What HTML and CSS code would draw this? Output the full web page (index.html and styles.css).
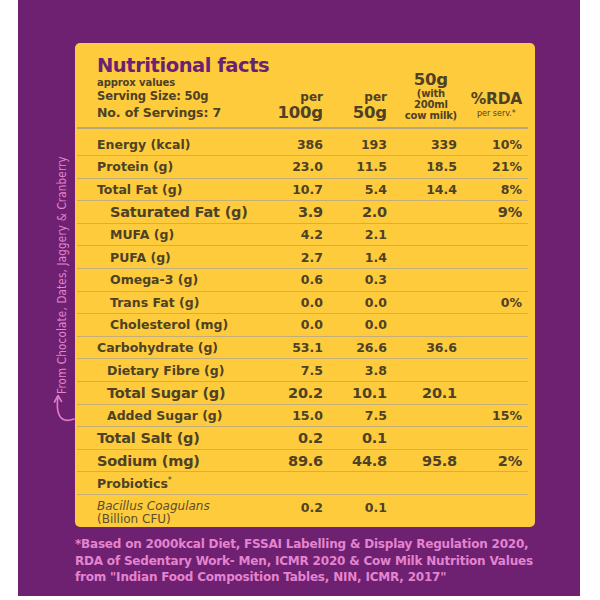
FILE: index.html
```html
<!DOCTYPE html>
<html>
<head>
<meta charset="utf-8">
<link rel="stylesheet" href="styles.css">
</head>
<body>
<div class="panel">
  <div class="note">From Chocolate, Dates, Jaggery &amp; Cranberry</div>
  <svg class="arrow" width="30" height="36" viewBox="0 0 30 36">
    <path d="M6 7 C4 20, 6 35, 22 29" fill="none" stroke="#e07cc8" stroke-width="1.6" stroke-linecap="round"/>
    <path d="M2.5 12 L6 5.5 L9.5 11.5" fill="none" stroke="#e07cc8" stroke-width="1.6" stroke-linecap="round" stroke-linejoin="round"/>
  </svg>
  <div class="card">
    <div class="head">
      <div class="head-left">
        <div class="title">Nutritional facts</div>
        <div class="approx">approx values</div>
        <div class="serving">Serving Size: 50g</div>
        <div class="servings">No. of Servings: 7</div>
      </div>
      <div class="hcell"><div class="stack right"><div class="per">per</div><div class="big">100g</div></div></div>
      <div class="hcell"><div class="stack right"><div class="per">per</div><div class="big">50g</div></div></div>
      <div class="hcell"><div class="stack"><div class="big">50g</div><div class="small">(with</div><div class="small">200ml</div><div class="small">cow milk)</div></div></div>
      <div class="hcell"><div class="stack"><div class="rda">%RDA</div><div class="serv">per serv.*</div></div></div>
    </div>
    <div class="rows">
      <div class="row first"><span class="lbl">Energy (kcal)</span><span>386</span><span>193</span><span>339</span><span>10%</span></div>
      <div class="row"><span class="lbl">Protein (g)</span><span>23.0</span><span>11.5</span><span>18.5</span><span>21%</span></div>
      <div class="row"><span class="lbl">Total Fat (g)</span><span>10.7</span><span>5.4</span><span>14.4</span><span>8%</span></div>
      <div class="row bold"><span class="lbl in1">Saturated Fat (g)</span><span>3.9</span><span>2.0</span><span></span><span>9%</span></div>
      <div class="row"><span class="lbl in1">MUFA (g)</span><span>4.2</span><span>2.1</span><span></span><span></span></div>
      <div class="row"><span class="lbl in1">PUFA (g)</span><span>2.7</span><span>1.4</span><span></span><span></span></div>
      <div class="row"><span class="lbl in1">Omega-3 (g)</span><span>0.6</span><span>0.3</span><span></span><span></span></div>
      <div class="row"><span class="lbl in1">Trans Fat (g)</span><span>0.0</span><span>0.0</span><span></span><span>0%</span></div>
      <div class="row"><span class="lbl in1">Cholesterol (mg)</span><span>0.0</span><span>0.0</span><span></span><span></span></div>
      <div class="row"><span class="lbl">Carbohydrate (g)</span><span>53.1</span><span>26.6</span><span>36.6</span><span></span></div>
      <div class="row"><span class="lbl in2">Dietary Fibre (g)</span><span>7.5</span><span>3.8</span><span></span><span></span></div>
      <div class="row bold"><span class="lbl in2">Total Sugar (g)</span><span>20.2</span><span>10.1</span><span>20.1</span><span></span></div>
      <div class="row"><span class="lbl in2">Added Sugar (g)</span><span>15.0</span><span>7.5</span><span></span><span>15%</span></div>
      <div class="row bold"><span class="lbl">Total Salt (g)</span><span>0.2</span><span>0.1</span><span></span><span></span></div>
      <div class="row bold"><span class="lbl">Sodium (mg)</span><span>89.6</span><span>44.8</span><span>95.8</span><span>2%</span></div>
      <div class="row"><span class="lbl">Probiotics<span class="ast">*</span></span><span></span><span></span><span></span><span></span></div>
      <div class="row last"><span class="lbl bac"><i>Bacillus Coagulans</i><br>(Billion CFU)</span><span>0.2</span><span>0.1</span><span></span><span></span></div>
    </div>
  </div>
  <p class="foot">*Based on 2000kcal Diet, FSSAI Labelling &amp; Display Regulation 2020,<br>RDA of Sedentary Work- Men, ICMR 2020 &amp; Cow Milk Nutrition Values<br>from "Indian Food Composition Tables, NIN, ICMR, 2017"</p>
</div>
</body>
</html>
```
FILE: styles.css
```css
html, body {
  margin: 0;
  padding: 0;
  background: #ffffff;
}
body {
  font-family: "DejaVu Sans", sans-serif;
  color: #4d4126;
}
.panel {
  position: relative;
  margin-left: 18px;
  width: 562px;
  height: 596px;
  background: #6d2170;
  box-sizing: border-box;
  padding-top: 43px;
  padding-left: 57px;
}
.note {
  position: absolute;
  left: 44px;
  top: 275px;
  transform: translate(-50%, -50%) rotate(-90deg);
  white-space: nowrap;
  font-family: "DejaVu Sans Condensed", "DejaVu Sans", sans-serif;
  font-size: 11.5px;
  color: #e583cf;
  letter-spacing: 0.2px;
}
.arrow {
  position: absolute;
  left: 34px;
  top: 390px;
}
.card {
  width: 460px;
  height: 484px;
  background: #fdcb3b;
  border-radius: 5px;
  box-sizing: border-box;
  padding: 12px 7px 0 2px;
}
.head, .row {
  display: grid;
  grid-template-columns: 166px 60px 64px 70px 65px;
  padding: 0 6px 0 20px;
}
.head {
  align-items: end;
  padding-bottom: 6px;
  border-bottom: 2px solid #b3a681;
}
.head-left {
  white-space: nowrap;
}
.title {
  font-size: 19.5px;
  font-weight: 900;
  color: #6a2175;
  letter-spacing: -0.45px;
  line-height: 22px;
}
.approx {
  font-size: 10px;
  line-height: 11px;
  font-weight: bold;
  letter-spacing: -0.1px;
}
.serving {
  font-size: 11.5px;
  line-height: 16px;
  font-weight: bold;
  letter-spacing: -0.1px;
}
.servings {
  font-size: 12.5px;
  line-height: 17px;
  font-weight: bold;
  letter-spacing: -0.1px;
}
.hcell {
  display: flex;
  justify-content: flex-end;
}
.stack {
  text-align: center;
  font-weight: bold;
  white-space: nowrap;
}
.stack.right {
  text-align: right;
}
.per {
  font-size: 12px;
  line-height: 13px;
}
.big {
  font-size: 16.5px;
  line-height: 17px;
  letter-spacing: -0.2px;
}
.small {
  font-size: 10px;
  line-height: 11px;
  letter-spacing: -0.2px;
}
.rda {
  font-size: 15.5px;
  line-height: 16px;
  letter-spacing: -0.3px;
}
.serv {
  font-size: 8px;
  line-height: 14px;
  font-weight: normal;
}
.ast {
  font-size: 8px;
  vertical-align: top;
  font-weight: normal;
}
.row {
  height: 22.6px;
  box-sizing: border-box;
  align-items: center;
  border-bottom: 1.5px solid #c3ad78;
  font-size: 12.5px;
  font-weight: bold;
  letter-spacing: 0;
}
.row.first {
  height: 27px;
  padding-top: 5px;
}
.row.bold {
  font-size: 14.5px;
  letter-spacing: -0.2px;
}
.row span {
  text-align: right;
  white-space: nowrap;
}
.row span.lbl {
  text-align: left;
}
.in1 { padding-left: 13px; }
.in2 { padding-left: 10px; }
.row.last {
  height: 34px;
  border-bottom: none;
  align-items: start;
  padding-top: 5px;
}
.bac {
  font-weight: normal;
  font-size: 12px;
  line-height: 13px;
  color: #5b4e2e;
}
.foot {
  margin: 9px 0 0 0;
  width: 490px;
  white-space: nowrap;
  font-size: 12px;
  line-height: 16.5px;
  font-weight: bold;
  color: #e583cf;
  letter-spacing: -0.2px;
}
```
